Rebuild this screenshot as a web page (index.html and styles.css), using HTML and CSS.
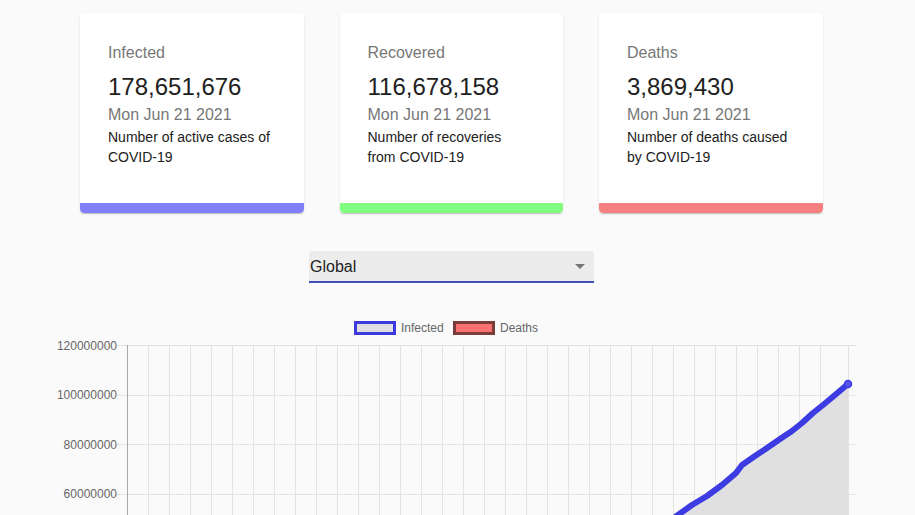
FILE: index.html
```html
<!DOCTYPE html>
<html>
<head>
<meta charset="utf-8">
<link rel="stylesheet" href="styles.css">
</head>
<body>
<div class="cards">
  <div class="card">
    <div class="card-content">
      <div class="card-title">Infected</div>
      <div class="card-value">178,651,676</div>
      <div class="card-date">Mon Jun 21 2021</div>
      <div class="card-desc">Number of active cases of<br>COVID-19</div>
    </div>
    <div class="card-bar bar-infected"></div>
  </div>
  <div class="card">
    <div class="card-content">
      <div class="card-title">Recovered</div>
      <div class="card-value">116,678,158</div>
      <div class="card-date">Mon Jun 21 2021</div>
      <div class="card-desc">Number of recoveries<br>from COVID-19</div>
    </div>
    <div class="card-bar bar-recovered"></div>
  </div>
  <div class="card">
    <div class="card-content">
      <div class="card-title">Deaths</div>
      <div class="card-value">3,869,430</div>
      <div class="card-date">Mon Jun 21 2021</div>
      <div class="card-desc">Number of deaths caused<br>by COVID-19</div>
    </div>
    <div class="card-bar bar-deaths"></div>
  </div>
</div>

<div class="select-row">
  <div class="select">
    <span class="select-text">Global</span>
    <svg class="select-arrow" width="24" height="24" viewBox="0 0 24 24"><path d="M7 10l5 5 5-5z" fill="#757575"/></svg>
  </div>
</div>

<div class="chart">
  <svg class="chart-svg" width="915" height="205" viewBox="0 0 915 205">
    <rect x="355.5" y="12.5" width="39" height="11" fill="#dedede" stroke="#3a3ae0" stroke-width="3"/>
    <text x="401" y="22" class="legend-text">Infected</text>
    <rect x="454.5" y="12.5" width="39" height="11" fill="#f87171" stroke="#7a3b3b" stroke-width="3"/>
    <text x="500" y="22" class="legend-text">Deaths</text>

    <g stroke="#e3e3e3" stroke-width="1">
      <line x1="117" y1="35.5" x2="856" y2="35.5"/>
      <line x1="117" y1="85.5" x2="856" y2="85.5"/>
      <line x1="117" y1="134.5" x2="856" y2="134.5"/>
      <line x1="117" y1="184.5" x2="856" y2="184.5"/>
    </g>
    <g stroke="#e3e3e3" stroke-width="1">
      <line x1="148.5" y1="35" x2="148.5" y2="205"/>
      <line x1="169.5" y1="35" x2="169.5" y2="205"/>
      <line x1="190.5" y1="35" x2="190.5" y2="205"/>
      <line x1="211.5" y1="35" x2="211.5" y2="205"/>
      <line x1="232.5" y1="35" x2="232.5" y2="205"/>
      <line x1="253.5" y1="35" x2="253.5" y2="205"/>
      <line x1="274.5" y1="35" x2="274.5" y2="205"/>
      <line x1="295.5" y1="35" x2="295.5" y2="205"/>
      <line x1="316.5" y1="35" x2="316.5" y2="205"/>
      <line x1="337.5" y1="35" x2="337.5" y2="205"/>
      <line x1="358.5" y1="35" x2="358.5" y2="205"/>
      <line x1="379.5" y1="35" x2="379.5" y2="205"/>
      <line x1="400.5" y1="35" x2="400.5" y2="205"/>
      <line x1="421.5" y1="35" x2="421.5" y2="205"/>
      <line x1="442.5" y1="35" x2="442.5" y2="205"/>
      <line x1="463.5" y1="35" x2="463.5" y2="205"/>
      <line x1="484.5" y1="35" x2="484.5" y2="205"/>
      <line x1="505.5" y1="35" x2="505.5" y2="205"/>
      <line x1="526.5" y1="35" x2="526.5" y2="205"/>
      <line x1="547.5" y1="35" x2="547.5" y2="205"/>
      <line x1="568.5" y1="35" x2="568.5" y2="205"/>
      <line x1="589.5" y1="35" x2="589.5" y2="205"/>
      <line x1="610.5" y1="35" x2="610.5" y2="205"/>
      <line x1="631.5" y1="35" x2="631.5" y2="205"/>
      <line x1="652.5" y1="35" x2="652.5" y2="205"/>
      <line x1="673.5" y1="35" x2="673.5" y2="205"/>
      <line x1="694.5" y1="35" x2="694.5" y2="205"/>
      <line x1="715.5" y1="35" x2="715.5" y2="205"/>
      <line x1="736.5" y1="35" x2="736.5" y2="205"/>
      <line x1="757.5" y1="35" x2="757.5" y2="205"/>
      <line x1="778.5" y1="35" x2="778.5" y2="205"/>
      <line x1="799.5" y1="35" x2="799.5" y2="205"/>
      <line x1="820.5" y1="35" x2="820.5" y2="205"/>
      <line x1="848.5" y1="35" x2="848.5" y2="205"/>
    </g>
    <line x1="127.5" y1="35" x2="127.5" y2="205" stroke="#a8a8a8" stroke-width="1"/>

    <g class="axis-text">
      <text x="117" y="39.5" text-anchor="end">120000000</text>
      <text x="117" y="89" text-anchor="end">100000000</text>
      <text x="117" y="138.5" text-anchor="end">80000000</text>
      <text x="117" y="188" text-anchor="end">60000000</text>
    </g>

    <polygon fill="#e0e0e0" points="664,215 678,205 692,195 707,186 722,175 736,163 742,155 755,146 767,138 780,129 792,121 802,113 813,103 823,95 835,85 848,74 848,215"/>
    <polyline fill="none" stroke="#3c3ce2" stroke-width="6" stroke-linejoin="round" stroke-linecap="round" points="664,215 678,205 692,195 707,186 722,175 736,163 742,155 755,146 767,138 780,129 792,121 802,113 813,103 823,95 835,85 848,74"/>
    <circle cx="848" cy="74" r="3.5" fill="#5555e6" stroke="#3c3ce2" stroke-width="1.5"/>
  </svg>
</div>
</body>
</html>
```

FILE: styles.css
```css
html, body {
  margin: 0;
  padding: 0;
  background: #fafafa;
  font-family: "Liberation Sans", Arial, sans-serif;
}

.cards {
  display: flex;
  gap: 36px;
  padding-top: 13px;
  padding-left: 80px;
}

.card {
  width: 223.5px;
  height: 200px;
  background: #fff;
  border-radius: 4px;
  box-shadow: 0 2px 1px -1px rgba(0,0,0,0.12), 0 1px 1px 0 rgba(0,0,0,0.08), 0 1px 3px 0 rgba(0,0,0,0.08);
  display: flex;
  flex-direction: column;
  overflow: hidden;
}

.card-content {
  flex: 1;
  padding: 28px 0 0 28px;
}

.card-title {
  font-size: 16px;
  line-height: 24px;
  color: #777;
  margin-bottom: 6px;
}

.card-value {
  font-size: 24px;
  line-height: 32px;
  color: #212121;
}

.card-date {
  font-size: 16px;
  line-height: 24px;
  color: #777;
}

.card-desc {
  font-size: 14px;
  line-height: 20px;
  color: #212121;
}

.card-bar {
  height: 10px;
  border-radius: 0 0 4px 4px;
}

.bar-infected { background: #8080ff; }
.bar-recovered { background: #80ff80; }
.bar-deaths { background: #f78080; }

.select-row {
  margin-top: 38px;
  padding-left: 309px;
}

.select {
  width: 285px;
  height: 30px;
  background: #ececec;
  border-bottom: 2px solid #3f51b5;
  display: flex;
  align-items: center;
  justify-content: space-between;
  border-radius: 2px 2px 0 0;
}

.select-text {
  font-size: 16px;
  color: #222;
  padding-left: 1px;
  padding-top: 1px;
}

.select-arrow {
  margin-right: 2px;
}

.chart {
  margin-top: 27px;
}

.chart-svg {
  display: block;
}

.legend-text {
  font-family: "Liberation Sans", Arial, sans-serif;
  font-size: 12px;
  fill: #666;
}

.axis-text {
  font-family: "Liberation Sans", Arial, sans-serif;
  font-size: 12px;
  fill: #666;
}
```
